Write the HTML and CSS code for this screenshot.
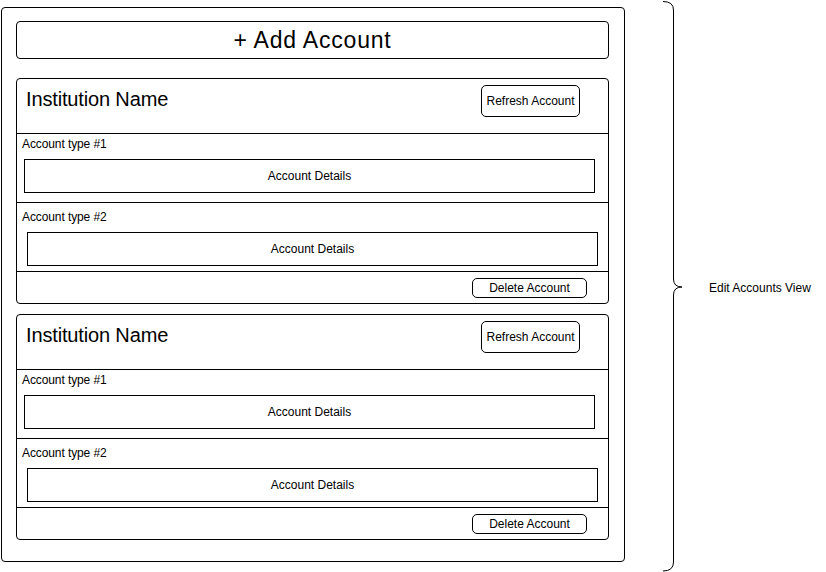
FILE: index.html
```html
<!DOCTYPE html>
<html lang="en">
<head>
<meta charset="utf-8">
<title>Edit Accounts View</title>
<link rel="stylesheet" href="styles.css">
</head>
<body>
<div class="page">
  <div class="panel">
    <div class="add-btn">+ Add Account</div>

    <div class="card">
      <div class="card-head">
        <div class="inst-name">Institution Name</div>
        <div class="refresh-btn">Refresh Account</div>
      </div>
      <div class="acct-row row-a">
        <div class="acct-label">Account type #1</div>
        <div class="acct-box box-a">Account Details</div>
      </div>
      <div class="acct-row row-b">
        <div class="acct-label">Account type #2</div>
        <div class="acct-box box-b">Account Details</div>
      </div>
      <div class="card-foot">
        <div class="delete-btn">Delete Account</div>
      </div>
    </div>

    <div class="card">
      <div class="card-head">
        <div class="inst-name">Institution Name</div>
        <div class="refresh-btn">Refresh Account</div>
      </div>
      <div class="acct-row row-a">
        <div class="acct-label">Account type #1</div>
        <div class="acct-box box-a">Account Details</div>
      </div>
      <div class="acct-row row-b">
        <div class="acct-label">Account type #2</div>
        <div class="acct-box box-b">Account Details</div>
      </div>
      <div class="card-foot">
        <div class="delete-btn">Delete Account</div>
      </div>
    </div>
  </div>

  <svg class="brace" width="30" height="572" viewBox="0 0 30 572" aria-hidden="true">
    <path d="M3,1.5 Q13.5,1.5 13.5,10 L13.5,279 Q13.5,287 22,287 Q13.5,287 13.5,295 L13.5,562 Q13.5,571 3,571" fill="none" stroke="#000" stroke-width="1"/>
  </svg>
  <div class="view-label">Edit Accounts View</div>
</div>
</body>
</html>
```

FILE: styles.css
```css
* {
  box-sizing: border-box;
}

html, body {
  margin: 0;
  padding: 0;
  background: #fff;
}

body {
  width: 826px;
  height: 572px;
  overflow: hidden;
  font-family: "Liberation Sans", Arial, Helvetica, sans-serif;
  color: #000;
}

.page {
  display: flex;
  align-items: flex-start;
  height: 572px;
}

.panel {
  margin: 7px 0 0 1px;
  width: 624px;
  height: 555px;
  border: 1px solid #000;
  border-radius: 4px;
  padding: 13px 15px 0 14px;
  display: flex;
  flex-direction: column;
}

.add-btn {
  height: 38px;
  border: 1px solid #000;
  border-radius: 4px;
  display: flex;
  align-items: center;
  justify-content: center;
  font-size: 23px;
  letter-spacing: 0.8px;
  margin-bottom: 19px;
}

.card {
  border: 1px solid #000;
  border-radius: 4px;
  margin-bottom: 10px;
}

.card-head {
  height: 55px;
  border-bottom: 1px solid #000;
  padding: 6px 28px 0 9px;
  display: flex;
  justify-content: space-between;
  align-items: flex-start;
}

.inst-name {
  font-size: 20px;
  line-height: 23px;
  margin-top: 3px;
  letter-spacing: -0.15px;
}

.refresh-btn {
  width: 99px;
  height: 32px;
  border: 1px solid #000;
  border-radius: 5px;
  display: flex;
  align-items: center;
  justify-content: center;
  font-size: 12px;
}

.acct-row {
  border-bottom: 1px solid #000;
}

.row-a {
  padding: 3px 0 9px 0;
}

.row-b {
  padding: 7px 0 5px 0;
}

.acct-label {
  font-size: 12px;
  line-height: 14px;
  padding-left: 5px;
  letter-spacing: -0.1px;
}

.acct-box {
  height: 34px;
  border: 1px solid #000;
  margin-top: 8px;
  display: flex;
  align-items: center;
  justify-content: center;
  font-size: 12px;
}

.box-a {
  margin-left: 7px;
  margin-right: 13px;
}

.box-b {
  margin-left: 10px;
  margin-right: 10px;
}

.card-foot {
  height: 31px;
  padding: 6px 21px 0 0;
  display: flex;
  justify-content: flex-end;
  align-items: flex-start;
}

.delete-btn {
  width: 115px;
  height: 20px;
  border: 1px solid #000;
  border-radius: 5px;
  display: flex;
  align-items: center;
  justify-content: center;
  font-size: 12px;
}

.brace {
  display: block;
  margin-left: 35px;
  flex: none;
}

.view-label {
  align-self: center;
  margin: 4px 0 0 19px;
  font-size: 12px;
  line-height: 14px;
  white-space: nowrap;
}
```
